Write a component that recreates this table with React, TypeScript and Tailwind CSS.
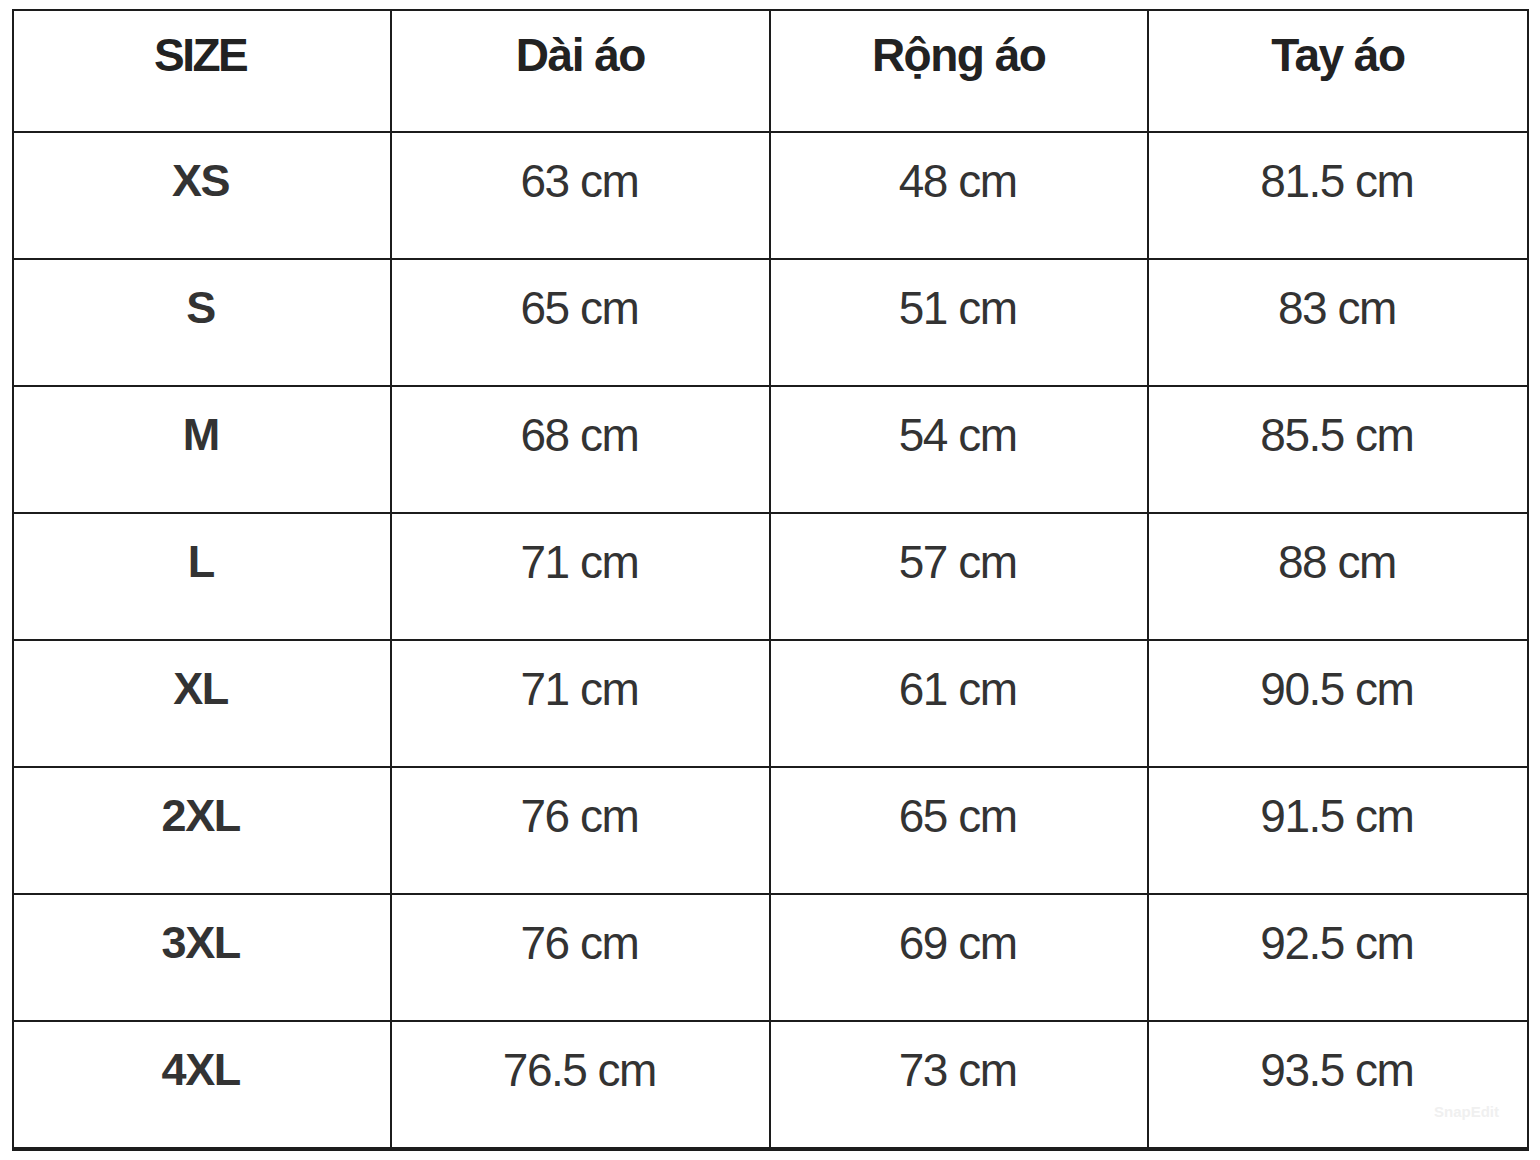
import React from 'react';

const headers = ['SIZE', 'Dài áo', 'Rộng áo', 'Tay áo'];

const rows: string[][] = [
  ['XS', '63 cm', '48 cm', '81.5 cm'],
  ['S', '65 cm', '51 cm', '83 cm'],
  ['M', '68 cm', '54 cm', '85.5 cm'],
  ['L', '71 cm', '57 cm', '88 cm'],
  ['XL', '71 cm', '61 cm', '90.5 cm'],
  ['2XL', '76 cm', '65 cm', '91.5 cm'],
  ['3XL', '76 cm', '69 cm', '92.5 cm'],
  ['4XL', '76.5 cm', '73 cm', '93.5 cm'],
];

const font = { fontFamily: '"Liberation Sans", Arial, sans-serif' };

export default function App() {
  return (
    <div className="min-h-[1160px] w-[1540px] bg-white pl-[12px] pt-[9px]" style={font}>
      <div className="relative w-[1517px] border-2 border-[#1c1c1c] divide-y-2 divide-[#1c1c1c]">
        {/* header */}
        <div className="grid h-[122px] grid-cols-4 divide-x-2 divide-[#1c1c1c]">
          {headers.map((h, i) => (
            <div
              key={h}
              className={`pt-[21px] text-center text-[46px] font-bold leading-none text-[#222222] ${i === 0 ? 'pr-[4px] tracking-[-2.5px]' : 'tracking-[-1.5px]'}`}
            >
              {h}
            </div>
          ))}
        </div>

        {rows.map((r) => (
          <div key={r[0]} className="grid h-[127px] grid-cols-4 divide-x-2 divide-[#1c1c1c]">
            <div className="pr-[3px] pt-[25px] text-center text-[45px] font-bold leading-none tracking-[-1.5px] text-[#333333]">
              {r[0]}
            </div>
            {r.slice(1).map((v, i) => (
              <div key={i} className="pr-[2px] pt-[25px] text-center text-[46px] leading-none tracking-[-1.5px] text-[#333333]">
                {v}
              </div>
            ))}
          </div>
        ))}

        {/* faint watermark */}
        <div className="absolute bottom-[26px] right-[28px] text-[15px] font-bold text-[#f0f0f0]">SnapEdit</div>
      </div>
    </div>
  );
}
